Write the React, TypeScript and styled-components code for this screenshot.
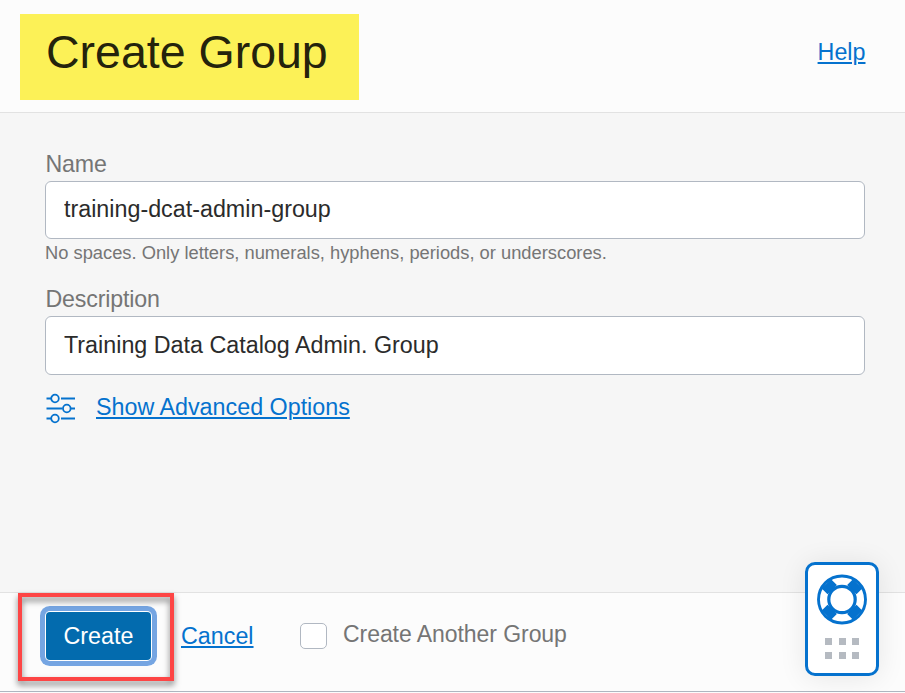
import React, { useState } from "react";
import styled, { createGlobalStyle } from "styled-components";

const BLUE = "#0572ce";

const GlobalStyle = createGlobalStyle`
  * { box-sizing: border-box; }
  body {
    margin: 0;
    background: #fcfcfc;
    font-family: "Liberation Sans", Arial, sans-serif;
    font-size: 23.3px;
    line-height: 28px;
    color: #2b2b2b;
    overflow: hidden;
  }
`;

const Dialog = styled.main`
  position: relative;
  display: flex;
  flex-direction: column;
  width: 905px;
  height: 692px;
  border-bottom: 1px solid #aeb6c0;
`;

const Header = styled.header`
  display: flex;
  justify-content: space-between;
  align-items: flex-start;
  height: 113px;
  padding: 14px 39.5px 0 20px;
  background: #fcfcfc;
  border-bottom: 1px solid #e2e2e2;
`;

const Title = styled.h1`
  width: 339px;
  height: 86px;
  margin: 0;
  padding-left: 26px;
  background: #fcf157;
  color: #24230c;
  font-size: 46.5px;
  font-weight: 400;
  line-height: 76px;
  white-space: nowrap;
`;

const Link = styled.a<{ $top?: number }>`
  margin-top: ${(p) => p.$top ?? 0}px;
  color: ${BLUE};
  text-decoration: underline;
  text-decoration-thickness: 2px;
  text-underline-offset: 2px;
  white-space: nowrap;
`;

const Form = styled.section`
  flex: 1;
  padding: 37px 40px 0 45px;
  background: #f6f6f6;
`;

const Field = styled.div`
  display: flex;
  flex-direction: column;
`;

const Label = styled.label`
  margin: 0 0 3px 0.5px;
  color: #757575;
  font-size: 23.2px;
  letter-spacing: -0.17px;
`;

const Input = styled.input<{ $height: number; $lift: number }>`
  width: 100%;
  height: ${(p) => p.$height}px;
  padding: 0 18px ${(p) => p.$lift}px;
  border: 1px solid #b1b8c2;
  border-radius: 6px;
  outline: none;
  background: #fff;
  color: #2b2b2b;
  font: inherit;
`;

const Hint = styled.p`
  height: 24px;
  margin: 2px 0 20px;
  color: #757575;
  font-size: 18.32px;
  line-height: 24px;
`;

const Advanced = styled.div`
  display: flex;
  align-items: flex-start;
  gap: 20px;
  margin-top: 18px;
`;

const Footer = styled.footer`
  display: flex;
  align-items: flex-start;
  height: 99px;
  padding: 19px 0 0 46px;
  background: #fcfcfc;
  border-top: 1px solid #e2e2e2;
`;

const CreateButton = styled.button`
  width: 105px;
  height: 48px;
  padding: 0 0 1px;
  border: 0;
  border-radius: 4px;
  outline: none;
  background: #036bae;
  box-shadow: 0 0 0 1px #fff, 0 0 0 6px #75a5e2;
  color: #fff;
  font: inherit;
`;

const CancelSlot = styled.div`
  display: flex;
  width: 149px;
  padding: 10px 0 0 30px;
`;

const CheckLabel = styled.label`
  display: flex;
  align-items: flex-start;
  gap: 16px;
  margin-top: 8px;
  color: #757575;
  font-size: 23px;
  letter-spacing: -0.06px;
  white-space: nowrap;
`;

const Checkbox = styled.input`
  appearance: none;
  width: 27px;
  height: 26px;
  margin: 3px 0 0;
  border: 1px solid #b1b8c2;
  border-radius: 5px;
  background: #fff;
`;

const Highlight = styled.div`
  position: absolute;
  left: 18px;
  top: 593px;
  width: 156px;
  height: 88px;
  border: 4px solid #fd4545;
  filter: drop-shadow(0 4px 3px rgba(0, 0, 0, 0.5));
  pointer-events: none;
`;

const SupportButton = styled.button`
  position: absolute;
  left: 805px;
  top: 562px;
  display: flex;
  flex-direction: column;
  align-items: center;
  gap: 13px;
  width: 74px;
  height: 114px;
  padding: 9px 0 0;
  border: 3px solid ${BLUE};
  border-radius: 10px;
  background: #fff;
  box-shadow: 0 2px 28px rgba(0, 0, 0, 0.09);
`;

const Dots = styled.span`
  display: grid;
  grid-template-columns: repeat(3, 7px);
  gap: 6.5px;
`;

const Dot = styled.i`
  width: 7px;
  height: 7px;
  background: #b5bac1;
`;

const SlidersIcon = () => (
  <svg width="31" height="31" viewBox="0 0 31 31" fill="none" stroke={BLUE} strokeWidth="1.8">
    <path d="M1.5 5.5H6M16 5.5H30M1.5 15.5H17.5M26 15.5H30M1.5 25.5H6M16 25.5H30" />
    <circle cx="10" cy="5.5" r="3.8" />
    <circle cx="21.8" cy="15.5" r="3.8" />
    <circle cx="10" cy="25.5" r="3.8" />
  </svg>
);

const LifebuoyIcon = () => (
  <svg width="50" height="51" viewBox="-25 -25.5 50 51" fill="none" stroke={BLUE}>
    <path
      strokeWidth="13.2"
      d="M9.8 9.8 15.6 15.6M-9.8 9.8-15.6 15.6M-9.8-9.8-15.6-15.6M9.8-9.8 15.6-15.6"
    />
    <circle r="23.5" strokeWidth="2.9" />
    <circle r="13.2" strokeWidth="3.2" />
  </svg>
);

export default function App() {
  const [name, setName] = useState("training-dcat-admin-group");
  const [description, setDescription] = useState("Training Data Catalog Admin. Group");

  return (
    <>
      <GlobalStyle />
      <Dialog>
        <Header>
          <Title>Create Group</Title>
          <Link href="#" $top={24}>Help</Link>
        </Header>
        <Form>
          <Field>
            <Label htmlFor="name">Name</Label>
            <Input id="name" $height={58} $lift={2} value={name} onChange={(e) => setName(e.target.value)} />
            <Hint>No spaces. Only letters, numerals, hyphens, periods, or underscores.</Hint>
          </Field>
          <Field>
            <Label htmlFor="description">Description</Label>
            <Input
              id="description"
              $height={59}
              $lift={1}
              value={description}
              onChange={(e) => setDescription(e.target.value)}
            />
          </Field>
          <Advanced>
            <SlidersIcon />
            <Link href="#">Show Advanced Options</Link>
          </Advanced>
        </Form>
        <Footer>
          <CreateButton type="button">Create</CreateButton>
          <CancelSlot>
            <Link href="#">Cancel</Link>
          </CancelSlot>
          <CheckLabel>
            <Checkbox type="checkbox" />
            <span>Create Another Group</span>
          </CheckLabel>
        </Footer>
        <Highlight />
        <SupportButton type="button" aria-label="Support">
          <LifebuoyIcon />
          <Dots>
            {Array.from({ length: 6 }, (_, i) => (
              <Dot key={i} />
            ))}
          </Dots>
        </SupportButton>
      </Dialog>
    </>
  );
}
